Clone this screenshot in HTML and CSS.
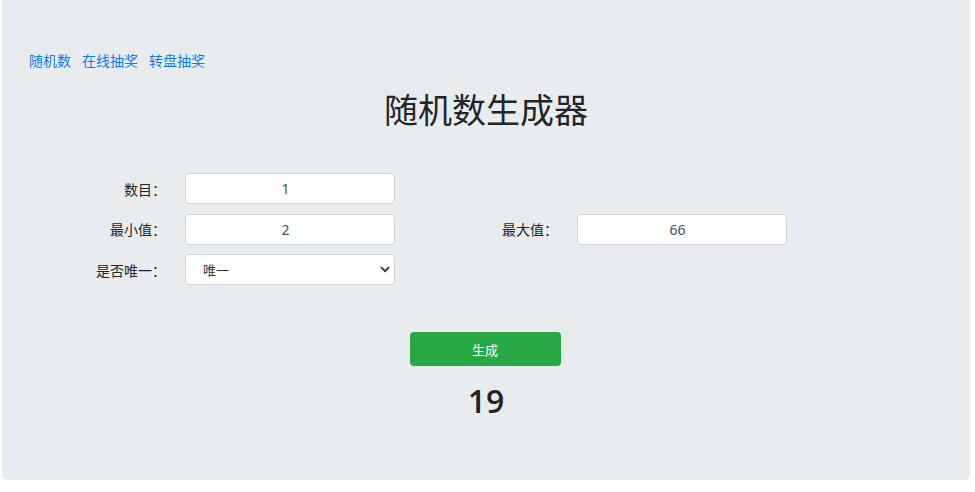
FILE: index.html
```html
<!DOCTYPE html>
<html lang="zh-CN">
<head>
<meta charset="utf-8">
<title>随机数生成器</title>
<link rel="stylesheet" href="styles.css">
</head>
<body>
<div class="page">
  <div class="jumbotron">
    <nav class="nav">
      <a href="#">随机数</a>
      <a href="#">在线抽奖</a>
      <a href="#">转盘抽奖</a>
    </nav>
    <h1 class="title">随机数生成器</h1>
    <form class="form">
      <label class="label">数目：</label>
      <input class="field" type="text" value="1">
      <span class="empty"></span>
      <span class="empty"></span>

      <label class="label">最小值：</label>
      <input class="field" type="text" value="2">
      <label class="label">最大值：</label>
      <input class="field" type="text" value="66">

      <label class="label">是否唯一：</label>
      <div class="select-wrap">
        <select class="select">
          <option>唯一</option>
          <option>不唯一</option>
        </select>
        <svg class="chevron" width="10" height="7" viewBox="0 0 10 7"><path d="M1 1.2 L5 5.2 L9 1.2" fill="none" stroke="#333" stroke-width="1.8"/></svg>
      </div>
    </form>
    <button class="btn" type="button">生成</button>
    <h2 class="result">19</h2>
  </div>
</div>
</body>
</html>
```
FILE: styles.css
```css
* { box-sizing: border-box; }
html, body { margin: 0; padding: 0; background: #fff; }
body {
  font-family: "Noto Sans", "Noto Sans CJK SC", sans-serif;
  font-size: 14px;
  color: #212529;
}
.page { padding: 0 5px 0 2px; }
.jumbotron {
  background: #e9ecef;
  height: 480px;
  border-radius: 0 0 5px 5px;
  padding: 50px 0 0 0;
}
.nav {
  display: flex;
  gap: 11px;
  padding-left: 27px;
  line-height: 20px;
  height: 20px;
}
.nav a {
  color: #0a7bf0;
  text-decoration: none;
  font-family: "Noto Sans CJK SC", sans-serif;
  font-size: 14px;
}
.title {
  margin: 18px 0 0 0;
  text-align: center;
  font-family: "Noto Sans CJK SC", sans-serif;
  font-weight: 400;
  font-size: 34px;
  line-height: 41px;
  color: #212529;
}
.form {
  margin-top: 44px;
  padding-left: 43px;
  display: grid;
  grid-template-columns: 121px 210px 144px 210px;
  column-gap: 19px;
  row-gap: 9.5px;
  grid-auto-rows: 31px;
}
.label {
  text-align: right;
  align-self: center;
  font-family: "Noto Sans CJK SC", sans-serif;
  font-size: 14px;
  color: #212529;
  line-height: 20px;
}
.field {
  height: 31px;
  width: 210px;
  border: 1px solid #ced4da;
  border-radius: 4px;
  background: #fff;
  text-align: center;
  padding: 0 21px 0 12px;
  font-family: "Noto Sans", "Noto Sans CJK SC", sans-serif;
  font-size: 14px;
  color: #495057;
}
.select-wrap { position: relative; width: 210px; height: 31px; }
.select {
  appearance: none;
  -webkit-appearance: none;
  width: 210px;
  height: 31px;
  border: 1px solid #ced4da;
  border-radius: 4px;
  background: #fff;
  padding: 0 0 0 17px;
  font-family: "Noto Sans CJK SC", sans-serif;
  font-size: 13px;
  color: #333;
}
.chevron { position: absolute; right: 5px; top: 12px; pointer-events: none; }
.btn {
  display: block;
  margin: 47px auto 0;
  width: 151px;
  height: 34px;
  border: 0;
  border-radius: 4px;
  background: #28a745;
  color: #fff;
  font-family: "Noto Sans CJK SC", sans-serif;
  font-size: 13px;
  position: relative;
  left: -1px;
}
.result {
  margin: 14px 0 0 0;
  text-align: center;
  font-family: "Open Sans", "Noto Sans", sans-serif;
  font-weight: 600;
  font-size: 32px;
  line-height: 41px;
  color: #212529;
}
```
